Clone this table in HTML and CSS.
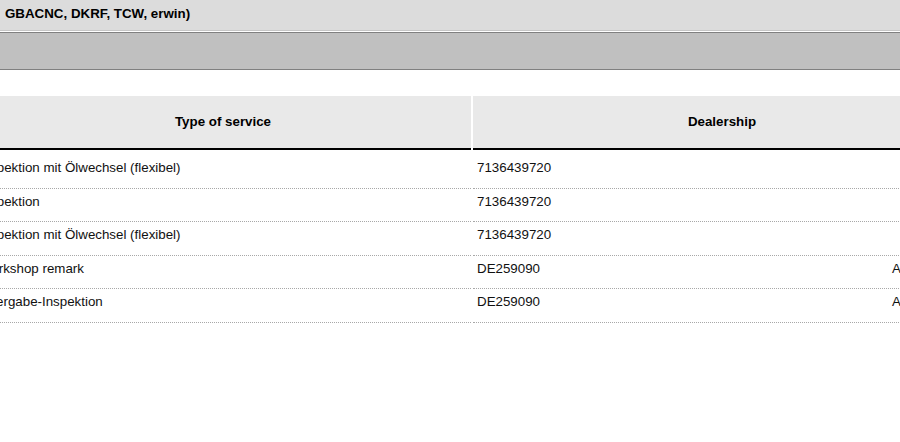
FILE: index.html
```html
<!DOCTYPE html>
<html>
<head>
<meta charset="utf-8">
<link rel="stylesheet" href="styles.css">
</head>
<body>
<div class="page">
  <div class="topbar">
    <span class="lead"><span>Service history (WVWZZZ1KZ7W123456 -</span></span>
    <span class="title">GBACNC, DKRF, TCW, erwin)</span>
  </div>
  <div class="band"></div>
  <div class="table">
    <div class="row head">
      <div class="cell c1">Type of service</div>
      <div class="cell c2">Dealership</div>
    </div>
    <div class="row body first">
      <div class="cell c1">Inspektion mit Ölwechsel (flexibel)</div>
      <div class="cell c2"><span class="num">7136439720</span><span class="name"></span></div>
    </div>
    <div class="row body">
      <div class="cell c1">Inspektion</div>
      <div class="cell c2"><span class="num">7136439720</span><span class="name"></span></div>
    </div>
    <div class="row body">
      <div class="cell c1">Inspektion mit Ölwechsel (flexibel)</div>
      <div class="cell c2"><span class="num">7136439720</span><span class="name"></span></div>
    </div>
    <div class="row body">
      <div class="cell c1">Workshop remark</div>
      <div class="cell c2"><span class="num">DE259090</span><span class="name">Autohaus Müller GmbH</span></div>
    </div>
    <div class="row body">
      <div class="cell c1">Übergabe-Inspektion</div>
      <div class="cell c2"><span class="num">DE259090</span><span class="name">Autohaus Müller GmbH</span></div>
    </div>
  </div>
</div>
</body>
</html>
```
FILE: styles.css
```css
html, body {
  margin: 0;
  padding: 0;
  background: #fff;
  overflow: hidden;
}
body {
  font-family: "Liberation Sans", Arial, sans-serif;
  font-size: 13.33px;
  color: #111;
}
.page {
  margin-left: -25px;
  width: 1600px;
}
.topbar {
  display: flex;
  align-items: center;
  box-sizing: border-box;
  height: 31px;
  padding-bottom: 4px;
  background: #dcdcdc;
  border-bottom: 1px solid #c6c6c6;
  font-weight: bold;
  color: #000;
  white-space: nowrap;
}
.lead {
  display: flex;
  justify-content: flex-end;
  width: 22px;
  overflow: hidden;
  flex: none;
}
.title {
  padding-left: 8px;
}
.band {
  margin-top: 1px;
  height: 36px;
  background: #c0c0c0;
  border-top: 1px solid #808080;
  border-bottom: 1px solid #808080;
}
.table {
  margin-top: 26px;
  display: flex;
  flex-direction: column;
}
.row {
  display: flex;
  gap: 2px;
}
.cell {
  flex: none;
  box-sizing: border-box;
}
.c1 { width: 496px; }
.c2 { width: 498px; }
.head .cell {
  height: 54px;
  background: #e9e9e9;
  border-bottom: 2px solid #000;
  display: flex;
  align-items: center;
  justify-content: center;
  font-weight: bold;
  color: #000;
  padding-bottom: 2px;
}
.body .cell {
  height: 33.5px;
  padding: 5px 4px 0;
  line-height: 16px;
  border-bottom: 1px dotted #a8a8a8;
  white-space: nowrap;
}
.body.first { margin-top: 5px; }
.body .c2 {
  display: grid;
  grid-template-columns: 415px auto;
}
```
